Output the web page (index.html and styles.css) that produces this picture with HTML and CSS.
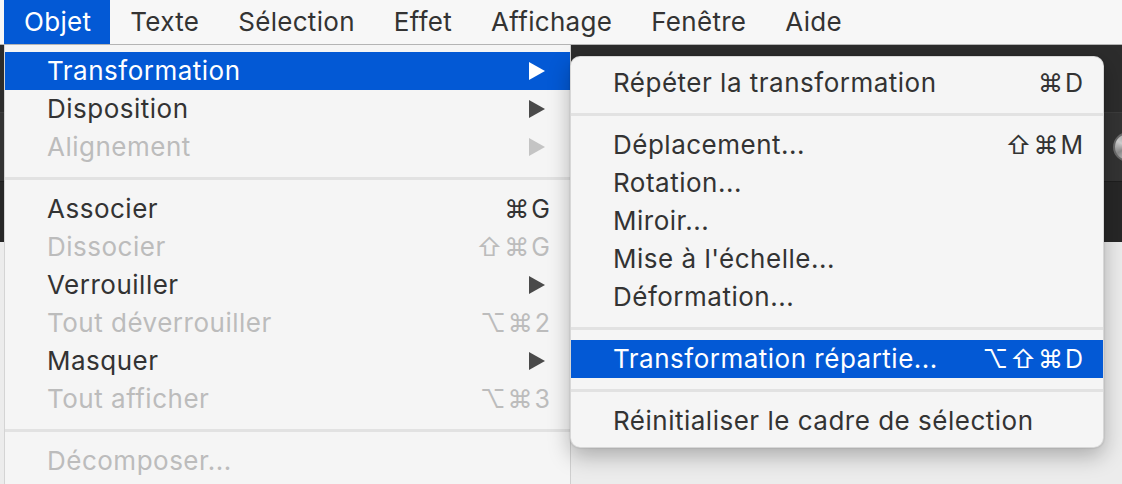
FILE: index.html
```html
<!DOCTYPE html>
<html lang="fr">
<head>
<meta charset="utf-8">
<title>Menu Objet</title>
<link rel="stylesheet" href="styles.css">
</head>
<body>
<div class="menubar">
  <span class="mb-item active">Objet</span>
  <span class="mb-item">Texte</span>
  <span class="mb-item">Sélection</span>
  <span class="mb-item">Effet</span>
  <span class="mb-item">Affichage</span>
  <span class="mb-item">Fenêtre</span>
  <span class="mb-item">Aide</span>
</div>
<div class="workspace">
  <div class="app">
    <div class="band band-1"></div>
    <div class="band band-2"><span class="disc"></span></div>
    <div class="band band-3"></div>
  </div>
  <div class="canvas"></div>

  <div class="menu main-menu">
    <div class="item hl"><span class="label">Transformation</span><span class="arrow"></span></div>
    <div class="item"><span class="label">Disposition</span><span class="arrow"></span></div>
    <div class="item off"><span class="label">Alignement</span><span class="arrow"></span></div>
    <div class="sep"></div>
    <div class="item"><span class="label">Associer</span><span class="key">⌘G</span></div>
    <div class="item off"><span class="label">Dissocier</span><span class="key">⇧⌘G</span></div>
    <div class="item"><span class="label">Verrouiller</span><span class="arrow"></span></div>
    <div class="item off"><span class="label">Tout déverrouiller</span><span class="key">⌥⌘2</span></div>
    <div class="item"><span class="label">Masquer</span><span class="arrow"></span></div>
    <div class="item off"><span class="label">Tout afficher</span><span class="key">⌥⌘3</span></div>
    <div class="sep"></div>
    <div class="item off"><span class="label">Décomposer...</span></div>
  </div>

  <div class="menu sub-menu">
    <div class="item"><span class="label">Répéter la transformation</span><span class="key">⌘D</span></div>
    <div class="sep"></div>
    <div class="item"><span class="label">Déplacement...</span><span class="key">⇧⌘M</span></div>
    <div class="item"><span class="label">Rotation...</span></div>
    <div class="item"><span class="label">Miroir...</span></div>
    <div class="item"><span class="label">Mise à l'échelle...</span></div>
    <div class="item"><span class="label">Déformation...</span></div>
    <div class="sep"></div>
    <div class="item hl"><span class="label">Transformation répartie...</span><span class="key">⌥⇧⌘D</span></div>
    <div class="sep"></div>
    <div class="item"><span class="label">Réinitialiser le cadre de sélection</span></div>
  </div>
</div>
</body>
</html>
```

FILE: styles.css
```css
* { box-sizing: border-box; }

html, body {
  margin: 0;
  padding: 0;
  width: 1122px;
  height: 484px;
  overflow: hidden;
  font-family: "Inter", "Roboto", "Liberation Sans", sans-serif;
  color: #333333;
  background: #ececec;
}

.menubar {
  height: 45px;
  display: flex;
  align-items: stretch;
  padding-left: 4px;
  background: #f7f7f7;
  border-bottom: 1px solid #b4b4b4;
  font-size: 26px;
  letter-spacing: 0.3px;
}

.mb-item {
  display: flex;
  align-items: center;
  padding: 0 19px 2px 20px;
  height: 44px;
  color: #333333;
}

.mb-item.active {
  background: #0359d5;
  color: #ffffff;
}

.workspace {
  position: relative;
  height: 439px;
  overflow: hidden;
}

.app {
  display: flex;
  flex-direction: column;
  height: 197px;
}

.band { width: 100%; }
.band-1 { height: 68px; background: #2c2c2c; border-bottom: 1px solid #3c3c3c; }
.band-2 {
  height: 69px;
  background: #333333;
  border-bottom: 1px solid #1e1e1e;
  display: flex;
  justify-content: flex-end;
  align-items: center;
  overflow: hidden;
}
.band-3 { height: 60px; background: #272727; }

.disc {
  width: 30px;
  height: 30px;
  margin-right: -21px;
  border-radius: 50%;
  background: conic-gradient(#9a9a9a, #d6d6d6, #7a7a7a, #c4c4c4, #8c8c8c, #d0d0d0, #9a9a9a);
  border: 2px solid #6a6a6a;
}

.canvas {
  height: 242px;
  background: #ececec;
}

.menu {
  position: absolute;
  background: #f5f5f5;
  font-size: 26px;
  letter-spacing: 0.5px;
}

.main-menu {
  left: 4px;
  top: 0;
  bottom: 0;
  width: 567px;
  padding-top: 7px;
  border-right: 1px solid #cfcfcf;
  border-left: 1px solid #d4d4d4;
}

.sub-menu {
  left: 570px;
  top: 11px;
  width: 534px;
  padding: 7px 0;
  border-radius: 10px;
  border: 1px solid rgba(0, 0, 0, 0.12);
  box-shadow: 0 8px 22px rgba(0, 0, 0, 0.28), 0 0 2px rgba(0, 0, 0, 0.2);
  overflow: hidden;
}

.item {
  display: flex;
  align-items: center;
  height: 38px;
  padding: 0 18px 1px 42px;
  color: #333333;
  white-space: nowrap;
}

.item .label { flex: 1; }

.item.off { color: #bcbcbc; }

.item.hl {
  background: #0359d5;
  color: #ffffff;
}

.key {
  font-family: "Inter", "DejaVu Sans", sans-serif;
  font-size: 25px;
  letter-spacing: 2px;
}

.arrow {
  width: 0;
  height: 0;
  margin-right: 7px;
  border-top: 9px solid transparent;
  border-bottom: 9px solid transparent;
  border-left: 16px solid #4a4a4a;
}

.item.off .arrow { border-left-color: #c4c4c4; }
.item.hl .arrow { border-left-color: #ffffff; }

.sep {
  height: 24px;
  display: flex;
  align-items: center;
}

.sep::before {
  content: "";
  display: block;
  width: 100%;
  height: 3px;
  background: #e2e2e2;
}
```
